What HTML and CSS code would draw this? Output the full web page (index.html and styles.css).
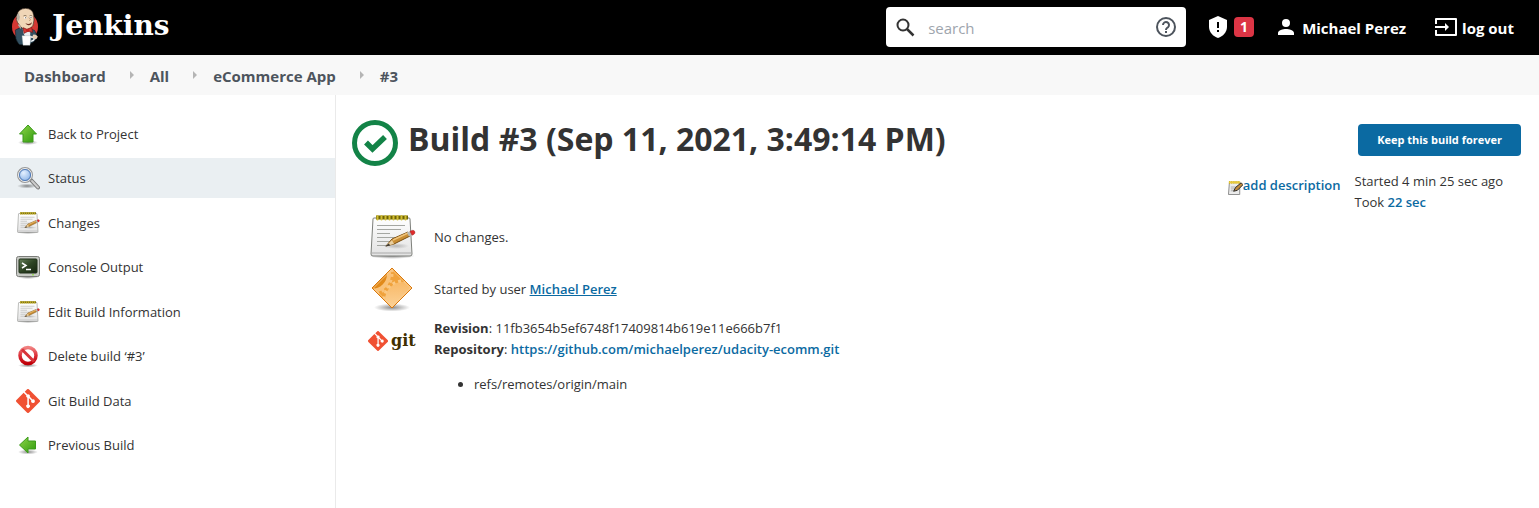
FILE: index.html
```html
<!DOCTYPE html>
<html lang="en">
<head>
<meta charset="utf-8">
<title>eCommerce App #3 [Jenkins]</title>
<link rel="stylesheet" href="styles.css">
</head>
<body>
<svg class="defs" aria-hidden="true">
  <defs>
    <linearGradient id="green" x1="0" y1="0" x2="1" y2="1"><stop offset="0" stop-color="#8fd64a"/><stop offset="1" stop-color="#2f9a0c"/></linearGradient>
    <linearGradient id="paper" x1="0" y1="0" x2="0" y2="1"><stop offset="0" stop-color="#ffffff"/><stop offset="1" stop-color="#e2e2e2"/></linearGradient>
    <linearGradient id="red" x1="0" y1="0" x2="0" y2="1"><stop offset="0" stop-color="#f08080"/><stop offset="0.5" stop-color="#dc3038"/><stop offset="1" stop-color="#c00008"/></linearGradient>
    <linearGradient id="screen" x1="0" y1="0" x2="1" y2="1"><stop offset="0" stop-color="#66805a"/><stop offset="0.5" stop-color="#2e4424"/><stop offset="1" stop-color="#16240f"/></linearGradient>
    <radialGradient id="lens" cx="0.4" cy="0.35" r="0.7"><stop offset="0" stop-color="#e4f0ff"/><stop offset="1" stop-color="#7fabe4"/></radialGradient>
    <radialGradient id="shade"><stop offset="0" stop-color="#000" stop-opacity="0.45"/><stop offset="1" stop-color="#000" stop-opacity="0"/></radialGradient>
    <symbol id="notepad" viewBox="0 0 48 48">
      <ellipse cx="24" cy="43" rx="23" ry="3" fill="url(#shade)"/>
      <path d="M6 5h35q1 0 1 1l2 35q0 2-2 2H5q-2 0-2-2L5 6q0-1 1-1z" fill="url(#paper)" stroke="#7d7f7a"/>
      <path d="M4 40h39" stroke="#aaa" stroke-width="1"/>
      <path d="M9 12.500h28M9 16.500h24M9 20.500h13M9 24.500h22M9 28.500h15M9 32.500h10" stroke="#a5a7a2" stroke-width="1"/>
      <path d="M8 4.500h32" stroke="#6f6300" stroke-width="4"/>
      <path d="M9.500 3v3.500M13.500 3v3.500M17.500 3v3.500M21.500 3v3.500M25.500 3v3.500M29.500 3v3.500M33.500 3v3.500M37.500 3v3.500" stroke="#d0bd34" stroke-width="2" stroke-linecap="round"/>
      <ellipse cx="28" cy="33" rx="13" ry="3" fill="url(#shade)" opacity="0.500"/>
      <path d="M18 33l6-7 16-7 2 4-16 8z" fill="#c98e35" stroke="#7b4f12"/>
      <path d="M25 27l15-7" stroke="#efc37a" stroke-width="1.500"/>
      <path d="M18 33l6-6 2 4z" fill="#e9cfa0"/>
      <path d="M17 33.500l4-3 1 2z" fill="#333"/>
      <path d="M39 19.500l3-1.300 2 4-3 1.300z" fill="#b8bab6"/>
      <path d="M42 18.200l3-1q2 .3 2 2.800-.5 1.500-3 2.200z" fill="#e02b2b" stroke="#a02020" stroke-width="0.500"/>
    </symbol>
    <symbol id="gitmark" viewBox="0 0 92 92">
      <path fill="#f05133" d="M90.200 41.900L50.100 1.800a5.900 5.900 0 0 0-8.300 0l-8.300 8.300 10.500 10.600a7 7 0 0 1 8.900 8.900L63 39.800a7 7 0 1 1-4.200 4l-9.500-9.500v25a7 7 0 1 1-5.800-.2V33.900a7 7 0 0 1-3.800-9.200L29.300 14.300 1.800 41.800a5.900 5.900 0 0 0 0 8.300l40.100 40.100a5.900 5.900 0 0 0 8.300 0l40-39.900a5.900 5.900 0 0 0 0-8.400z"/>
    </symbol>
  </defs>
</svg>

<header class="header">
  <a class="brand" href="#">
    <svg class="brand-icon" viewBox="0 0 84 114" aria-hidden="true">
      <ellipse cx="42" cy="56" rx="39" ry="42" fill="#d33833"/>
      <path d="M13 66l17-8 24 4 16 5q7 8 8 22l-10 12-14 8H26q-8-7-11-17z" fill="#335061" stroke="#182833" stroke-width="2"/>
      <path d="M35 61l10 8 12-4 5 20H38z" fill="#e8eef2"/>
      <path d="M28 59l14 26-4 24H24l-8-26 7-20zM59 64l12 6 6 18-9 7-11-10z" fill="#335061"/>
      <path d="M18 22Q21 2 44 1q22 1 24 21l1 14q0 18-12 27-17 6-28-7L20 44q-7-9-2-22z" fill="#f0d6b7" stroke="#3b2c22" stroke-width="2"/>
      <path d="M18 21l7-8q-2 9 2 13l-3 12-5-3q-4-7-1-14zM24 47l6 10-1 6-8-11z" fill="#b8b0a4"/>
      <path d="M37 24q5-4 10 0M55 24q5-4 9 0" stroke="#6d5a46" stroke-width="2" fill="none"/>
      <ellipse cx="43" cy="29" rx="4" ry="3" fill="#fff"/><ellipse cx="59" cy="28" rx="4" ry="3" fill="#fff"/>
      <circle cx="44" cy="29" r="1.500" fill="#111"/><circle cx="60" cy="28" r="1.500" fill="#111"/>
      <path d="M54 28q8 8 1 11" stroke="#a57a57" stroke-width="2" fill="none"/>
      <path d="M43 45q11 7 20-2-2 10-11 9-6-1-9-7z" fill="#6b2c20"/>
      <path d="M36 59l12 5 14-6 3 15-14-3-12 6z" fill="#d33833" stroke="#711" stroke-width="2"/>
      <circle cx="50" cy="67" r="5" fill="#c4201f"/>
      <path d="M33 83h27l-3 29H36z" fill="#fff" stroke="#9aa" stroke-width="1"/>
      <path d="M60 87q11-1 9 8-3 5-10 4" fill="none" stroke="#fff" stroke-width="4"/>
      <path d="M66 80q11-1 13 5 1 8-7 9l-8-5z" fill="#e4ccb2"/>
    </svg>
    <span class="brand-name">Jenkins</span>
  </a>
  <form class="search" role="search">
    <svg class="search-icon" viewBox="0 0 25 25" aria-hidden="true"><circle cx="10" cy="10" r="5.500" fill="none" stroke="#333" stroke-width="2"/><path d="M14 14l6.500 6.500" stroke="#333" stroke-width="2.500"/></svg>
    <input class="search-input" type="text" placeholder="search" aria-label="search">
    <a class="help" href="#" aria-label="Search help"><svg viewBox="0 0 20 20" width="20" height="20"><circle cx="10" cy="10" r="9" fill="none" stroke="#4d545d" stroke-width="2"/><path d="M7 8a3 3 0 1 1 5 2.200C11 11 10 11.500 10 13" fill="none" stroke="#4d545d" stroke-width="2"/><path d="M9 14h2v2H9z" fill="#4d545d"/></svg></a>
  </form>
  <a class="security" href="#">
    <svg viewBox="0 0 18 22" width="18" height="22" aria-hidden="true"><path d="M9 0l9 4v7c0 5-4 9.500-9 11-5-1.500-9-6-9-11V4z" fill="#fff"/><path d="M8 6h2v6H8zM8 14h2v2H8z" fill="#000"/></svg>
    <span class="badge">1</span>
  </a>
  <a class="user" href="#">
    <svg viewBox="0 0 16 16" width="16" height="16" aria-hidden="true"><path d="M8 8a4 4 0 1 0 0-8 4 4 0 0 0 0 8zm0 2c-3 0-8 1.300-8 4v2h16v-2c0-2.700-5-4-8-4z" fill="#fff"/></svg>
    <span>Michael Perez</span>
  </a>
  <a class="logout" href="#">
    <svg viewBox="0 0 22 18" width="22" height="18" aria-hidden="true"><path d="M1 6V1h20v16H1v-5" fill="none" stroke="#fff" stroke-width="2" stroke-linejoin="round"/><path d="M0 8h10V5l4 4-4 4v-3H0z" fill="#fff"/></svg>
    <span>log out</span>
  </a>
</header>

<nav class="crumbs" aria-label="Breadcrumb">
  <a href="#">Dashboard</a><span class="arrow"></span>
  <a href="#">All</a><span class="arrow"></span>
  <a href="#">eCommerce App</a><span class="arrow"></span>
  <a href="#">#3</a>
</nav>

<div class="page">
  <nav class="side" aria-label="Build">
    <ul class="tasks">
      <li><a class="task" href="#"><svg viewBox="0 0 24 24"><ellipse cx="12" cy="20.500" rx="10" ry="2.500" fill="url(#shade)"/><path d="M12 3l8.500 9H17v8H7v-8H3.500z" fill="url(#green)" stroke="#3c9a1c"/></svg>Back to Project</a></li>
      <li><a class="task active" href="#" aria-current="page"><svg viewBox="0 0 24 24"><ellipse cx="11" cy="20" rx="10" ry="2.500" fill="url(#shade)"/><path d="M14.500 13.500l7.500 8" stroke="#777" stroke-width="4" stroke-linecap="round"/><path d="M16 15l6 6.500" stroke="#ccc" stroke-width="2" stroke-linecap="round"/><circle cx="9" cy="9" r="7" fill="url(#lens)" stroke="#999" stroke-width="2"/><circle cx="9" cy="9" r="6.500" fill="none" stroke="#eee" stroke-width="1"/><circle cx="9" cy="9" r="5.500" fill="none" stroke="#4d79b8" stroke-width="1"/></svg>Status</a></li>
      <li><a class="task" href="#"><svg><use href="#notepad"/></svg>Changes</a></li>
      <li><a class="task" href="#"><svg viewBox="0 0 24 24"><ellipse cx="12" cy="22" rx="11" ry="2" fill="url(#shade)"/><rect x="0.500" y="1.500" width="23" height="20" rx="2" fill="#c8cac5" stroke="#7b7d79"/><rect x="3" y="4" width="18" height="14" rx="1" fill="url(#screen)" stroke="#20301a"/><path d="M6 8l4 2.500L6 13" fill="none" stroke="#fff" stroke-width="1.500"/><path d="M10 14.500h5" stroke="#fff" stroke-width="1.500"/><path d="M16 19.800h2" stroke="#8ae234"/></svg>Console Output</a></li>
      <li><a class="task" href="#"><svg><use href="#notepad"/></svg>Edit Build Information</a></li>
      <li><a class="task" href="#"><svg viewBox="0 0 24 24"><ellipse cx="12" cy="21.500" rx="10" ry="2" fill="url(#shade)"/><circle cx="12" cy="11.500" r="8" fill="#fff" stroke="url(#red)" stroke-width="3.500"/><path d="M6 5.500l12 12" stroke="#d8343a" stroke-width="3"/></svg>Delete build ‘#3’</a></li>
      <li><a class="task" href="#"><svg><use href="#gitmark"/></svg>Git Build Data</a></li>
      <li><a class="task" href="#"><svg viewBox="0 0 24 24"><ellipse cx="12" cy="19" rx="10" ry="2.500" fill="url(#shade)"/><path d="M3.500 12L12 4v4h7.500v8H12v4z" fill="url(#green)" stroke="#3c9a1c"/></svg>Previous Build</a></li>
    </ul>
  </nav>

  <main class="main">
    <div class="content">
      <h1 class="title">
        <svg viewBox="0 0 46 46" width="46" height="46" role="img" aria-label="Success"><circle cx="23" cy="23" r="20.500" fill="none" stroke="#138347" stroke-width="5"/><path d="M14 22.500l6.500 6.500L33 17" fill="none" stroke="#138347" stroke-width="5.500"/></svg>
        <span>Build #3 (Sep 11, 2021, 3:49:14 PM)</span>
      </h1>
      <table class="summary">
        <tr>
          <td class="pic"><svg class="large"><use href="#notepad"/></svg></td>
          <td>No changes.</td>
        </tr>
        <tr>
          <td class="pic"><svg class="large" viewBox="0 0 48 48"><defs><linearGradient id="orange" x1="0" y1="0" x2="0" y2="1"><stop offset="0" stop-color="#f8b968"/><stop offset="1" stop-color="#fddcaa"/></linearGradient><clipPath id="tile"><path d="M24 3l20 20-20 20L4 23z"/></clipPath></defs>
            <ellipse cx="24" cy="42.500" rx="18" ry="4" fill="url(#shade)"/>
            <path d="M24 3l20 20-20 20L4 23z" fill="#f0a23c"/>
            <g clip-path="url(#tile)">
              <circle cx="4" cy="9" r="19" fill="#f9c27a"/>
              <circle cx="4" cy="9" r="20" fill="none" stroke="#f9c27a" stroke-width="3" stroke-dasharray="3 3"/>
              <circle cx="4" cy="9" r="15" fill="#e18a1b"/>
              <circle cx="35" cy="35" r="18" fill="url(#orange)"/>
              <circle cx="35" cy="35" r="19" fill="none" stroke="#fac985" stroke-width="3" stroke-dasharray="3 3"/>
            </g>
            <path d="M24 3l20 20-20 20L4 23z" fill="none" stroke="#d9780c" stroke-width="1" stroke-linejoin="round"/><path d="M24 4.500l18.500 18.500L24 41.500 5.500 23z" fill="none" stroke="#fcd093" stroke-width="0.700"/></svg></td>
          <td>Started by user <a class="under" href="#">Michael Perez</a></td>
        </tr>
        <tr>
          <td class="pic"><span class="gitlogo"><svg class="gitmark"><use href="#gitmark"/></svg><span>git</span></span></td>
          <td class="revision">
            <b>Revision</b>: 11fb3654b5ef6748f17409814b619e11e666b7f1<br>
            <b>Repository</b>: <a href="#">https://github.com/michaelperez/udacity-ecomm.git</a>
            <ul class="refs"><li>refs/remotes/origin/main</li></ul>
          </td>
        </tr>
      </table>
    </div>
    <aside class="info">
      <button class="keep" type="button">Keep this build forever</button>
      <div class="details">
        <a class="describe" href="#"><svg class="small" viewBox="0 0 16 16" aria-hidden="true"><path d="M1.500 2.500h11v13h-12z" fill="#ececec" stroke="#888"/><path d="M3 7.500h6M3 9.500h4M3 11.500h3" stroke="#aaa"/><path d="M1 2.500h12" stroke="#c9a400" stroke-width="3" stroke-dasharray="1 1"/><path d="M1 2.500h12" stroke="#e8ca3c" stroke-width="2"/><path d="M6 12l2-4 6-5 2 2-6 6z" fill="#c08a3c" stroke="#222"/></svg>add description</a>
        <div class="times">Started 4 min 25 sec ago<br>Took <a href="#">22 sec</a></div>
      </div>
    </aside>
  </main>
</div>
</body>
</html>
```

FILE: styles.css
```css
* { box-sizing: border-box; }
body {
  margin: 0;
  min-height: 100vh;
  display: flex;
  flex-direction: column;
  background: #fff;
  color: #333;
  font: 13px/21px "Open Sans", "Noto Sans", sans-serif;
}
a { color: #0b6aa2; font-weight: 600; text-decoration: none; }
.defs { position: absolute; width: 0; height: 0; }

.header {
  display: flex;
  align-items: center;
  height: 55px;
  padding: 0 25px 1px 11px;
  background: #000;
}
.header a { color: #fff; font-size: 15px; font-weight: 700; }
.brand { display: flex; align-items: center; gap: 13px; margin-right: auto; }
.brand-icon { width: 28px; height: 38px; }
.header .brand-name { padding-bottom: 3px; font: bold 28px/32px "DejaVu Serif", serif; }
.search {
  display: flex;
  align-items: center;
  width: 300px;
  height: 40px;
  padding: 0 10px 0 7px;
  background: #fff;
  border-radius: 4px;
}
.search-icon { width: 25px; height: 25px; }
.search-input {
  flex: 1;
  min-width: 0;
  margin: 3px 0 0 10px;
  padding: 0;
  border: 0;
  outline: 0;
  background: none;
  color: #333;
  font: 15px/21px "Open Sans", sans-serif;
}
.search-input::placeholder { color: #9ea5ad; }
.help { display: flex; }
.security, .user, .logout { display: flex; align-items: center; }
.security { gap: 7px; margin-left: 23px; }
.header .badge {
  width: 20px;
  height: 20px;
  border-radius: 4px;
  background: #dc3545;
  font-size: 14px;
  line-height: 20px;
  text-align: center;
}
.user { gap: 8px; margin-left: 24px; }
.logout { gap: 5px; margin-left: 29px; }
.user span, .logout span { padding-top: 2px; }

.crumbs {
  display: flex;
  align-items: center;
  height: 40px;
  padding: 3px 24px 0;
  background: #f8f8f8;
}
.crumbs a { color: #4d545d; font-size: 15px; font-weight: 700; }
.arrow {
  margin: 0 16px 4px 24px;
  border: solid transparent;
  border-width: 4px 0 4px 4px;
  border-left-color: #b5b5b5;
}

.page { display: flex; flex: 1; }
.side { width: 336px; padding-top: 19px; border-right: 1px solid #eaeaea; }
.tasks { margin: 0; padding: 0; list-style: none; }
.tasks li { margin-bottom: 4px; }
.tasks li:nth-child(even) { margin-bottom: 5px; }
.task {
  display: flex;
  align-items: center;
  gap: 8px;
  height: 40px;
  padding: 0 16px;
  color: #333;
  font-weight: 400;
}
.task svg { width: 24px; height: 24px; }
.active { background: #eaeff2; }

.main { display: flex; flex: 1; justify-content: space-between; padding: 25px 18px 0 16px; }
.title { display: flex; gap: 10px; margin: 0 0 45px; font-size: 32px; line-height: 38px; }
.summary { border-collapse: collapse; margin-left: 16px; }
.summary td { height: 52px; padding: 0; }
.summary .pic { width: 66px; }
.large { display: block; width: 48px; height: 48px; }
.under { text-decoration: underline; }
.summary .revision { padding-top: 3px; }
.summary tr:last-child td { vertical-align: top; }
.gitlogo {
  display: flex;
  align-items: center;
  gap: 3px;
  padding-top: 16px;
  color: #413000;
  font: bold 16px/20px "DejaVu Serif", serif;
}
.gitmark { width: 20px; height: 20px; }
.refs { margin: 14px 0 0; padding-left: 40px; }

.info { display: flex; flex-direction: column; align-items: flex-end; padding-top: 4px; }
.keep {
  height: 32px;
  padding: 0 19px;
  border: 0;
  border-radius: 4px;
  background: #0b6aa2;
  color: #fff;
  font: 700 11px/16px "Open Sans", sans-serif;
}
.details { display: flex; gap: 14px; margin-top: 15px; padding-right: 18px; }
.describe { display: flex; align-items: center; height: 21px; margin-top: 4px; }
.small { width: 15px; height: 15px; margin-top: 4px; }
```
